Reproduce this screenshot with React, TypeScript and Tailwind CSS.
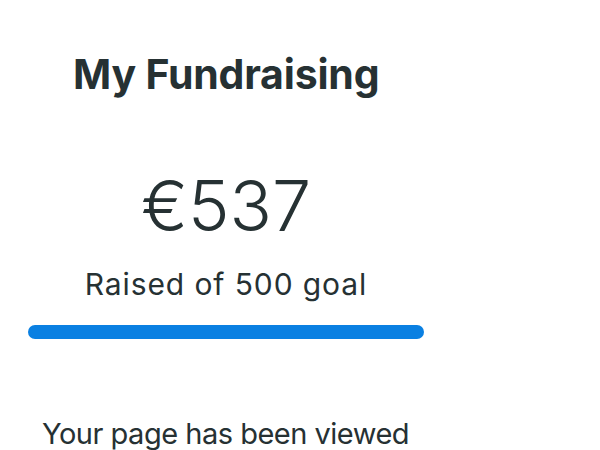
export default function App() {
  return (
    <div className="min-h-[450px] w-[600px] bg-white font-['Inter',sans-serif] text-[#263133]">
      <div className="ml-[28px] flex w-[396px] flex-col pt-[54px]">
        <h1 className="pl-[45px] text-[41px] font-bold leading-none tracking-[-0.2px]">
          My Fundraising
        </h1>

        <div className="mt-[76px] flex flex-col items-center">
          <p className="text-[70px] font-light leading-none">€537</p>
          <p className="mt-[28px] text-[30px] leading-none tracking-[0.9px]">
            Raised of 500 goal
          </p>
        </div>

        <div className="mt-[26px] h-[14px] w-full rounded-full bg-[#0a80e2]" />

        <p className="mt-[80px] whitespace-nowrap pl-[14px] text-[29px] leading-none tracking-[-0.5px]">
          Your page has been viewed
        </p>
      </div>
    </div>
  )
}
